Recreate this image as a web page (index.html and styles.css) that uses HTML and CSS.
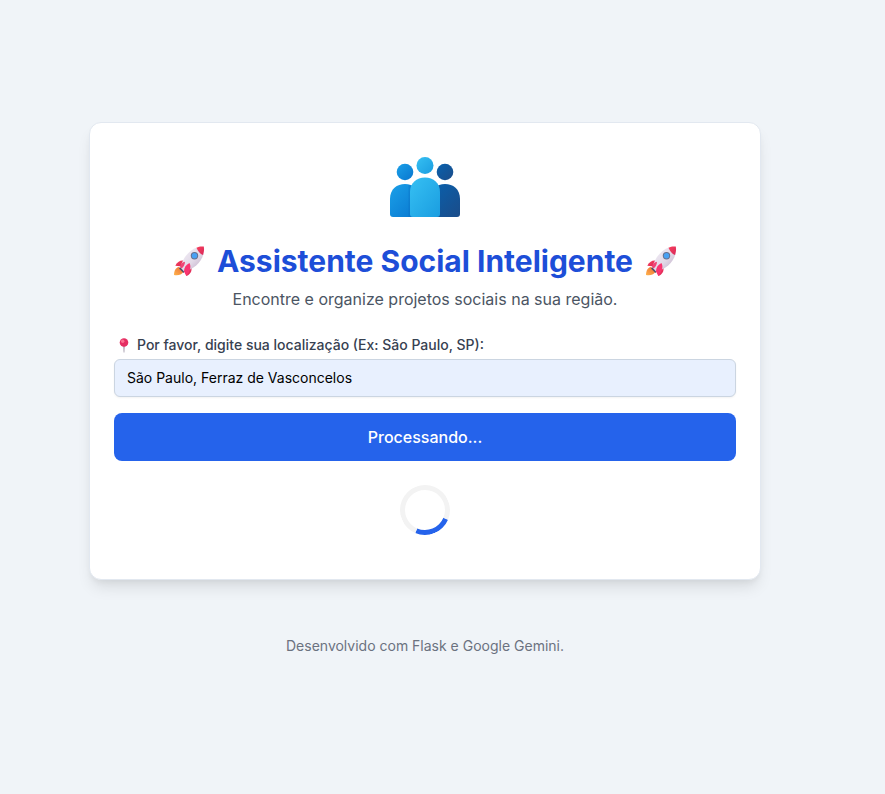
FILE: index.html
```html
<!DOCTYPE html>
<html lang="pt-BR">
<head>
<meta charset="utf-8">
<title>Assistente Social Inteligente</title>
<link rel="stylesheet" href="styles.css">
</head>
<body>
<svg class="defs" width="0" height="0" aria-hidden="true">
  <defs>
    <linearGradient id="body" x1="0" y1="0" x2="1" y2="1"><stop offset="0" stop-color="#f4f0f8"/><stop offset=".55" stop-color="#e2d9e7"/><stop offset="1" stop-color="#b9a5c2"/></linearGradient>
    <linearGradient id="red" x1="0" y1="0" x2="1" y2="1"><stop offset="0" stop-color="#f8415d"/><stop offset="1" stop-color="#d92759"/></linearGradient>
    <linearGradient id="flame" x1="1" y1="0" x2="0" y2="1"><stop offset="0" stop-color="#e96a35"/><stop offset="1" stop-color="#ffb34b"/></linearGradient>
    <symbol id="rocket" viewBox="0 0 32 32">
      <path d="M5 21C1.500 21.500 0 25 0 29C4 30 8.500 28.500 10 25Z" fill="url(#flame)"/>
      <path d="M6.500 21L11 25L9.500 27L5 22.500Z" fill="#4d4968"/>
      <path d="M10 14.500C6 14 3 16 1.300 19.800L8 20.500Z" fill="url(#red)"/>
      <path d="M17.500 21C18 26 16 28.500 12.300 30L11 24Z" fill="url(#red)"/>
      <path d="M6.500 21.500C8 13 15 4 23 1.500L29.500 8C27 17 19 23.500 10 25.500Z" fill="url(#body)"/>
      <path d="M22.500 1.700C25 .5 27 .3 29.800 .6C30.400 4 29.900 6.500 29 8.900C26 7.800 24 5.500 22.500 1.700Z" fill="url(#red)"/>
      <path d="M6 20.500C6.500 18 8.500 16 11 15.700C11 18.500 9.500 21 7.500 22.500Z" fill="#f04475"/>
      <path d="M10 25.500C10 21.500 12 18.500 15.500 17C17.500 21 16 25.500 12.300 30Z" fill="#f93470"/>
      <circle cx="20.500" cy="9.700" r="3.700" fill="#65708f"/>
      <circle cx="20.500" cy="9.700" r="2.700" fill="#48a1f4"/>
    </symbol>
  </defs>
</svg>
<main class="page">
  <section class="card">
    <svg class="logo" viewBox="0 0 70 60" aria-hidden="true">
      <defs>
        <linearGradient id="left" x1="0" y1="0" x2="1" y2="1"><stop stop-color="#1ba0e8"/><stop offset="1" stop-color="#0876cf"/></linearGradient>
        <linearGradient id="mid" x1="0" y1="0" x2="1" y2="1"><stop stop-color="#36c0f3"/><stop offset="1" stop-color="#1a9de0"/></linearGradient>
        <linearGradient id="right" x1="0" y1="0" x2="1" y2="1"><stop stop-color="#0861ae"/><stop offset="1" stop-color="#1b4c89"/></linearGradient>
      </defs>
      <circle cx="15" cy="15" r="8.300" fill="url(#left)"/>
      <circle cx="55" cy="15" r="8.300" fill="url(#right)"/>
      <circle cx="35" cy="8.500" r="8.500" fill="url(#mid)"/>
      <path d="M0 42C0 32 7 27 15 27S30 32 30 42V60H3Q0 60 0 57Z" fill="url(#left)"/>
      <path d="M40 42C40 32 47 27 55 27S70 32 70 42V57Q70 60 67 60H40Z" fill="url(#right)"/>
      <path d="M18.500 28Q19 27.500 22 29V60H18.500Z" fill="#086dbf" opacity=".35"/>
      <path d="M20 35C20 26 26.500 20.500 35 20.500S50 26 50 35V57Q50 60 47 60H23Q20 60 20 57Z" fill="url(#mid)"/>
    </svg>
    <h1 class="title">
      <svg class="rocket"><use href="#rocket"/></svg>
      <span>Assistente Social Inteligente</span>
      <svg class="rocket"><use href="#rocket"/></svg>
    </h1>
    <p class="subtitle">Encontre e organize projetos sociais na sua região.</p>
    <form class="form">
      <label class="label" for="location">
        <svg class="pin" viewBox="0 0 10 15"><path d="M4.400 8H5.600L5.300 14.500H4.700Z" fill="#8d8297"/><circle cx="5" cy="4.500" r="4.300" fill="#e52e62"/><circle cx="3.700" cy="3.200" r="1.700" fill="#fb7191"/></svg>
        <span>Por favor, digite sua localização (Ex: São Paulo, SP):</span>
      </label>
      <input class="input" id="location" type="text" value="São Paulo, Ferraz de Vasconcelos">
      <button class="button" type="button">Processando...</button>
    </form>
    <div class="spinner"></div>
  </section>
  <footer class="footer">Desenvolvido com Flask e Google Gemini.</footer>
</main>
</body>
</html>
```
FILE: styles.css
```css
* { box-sizing: border-box; }
body {
  margin: 0;
  min-height: 794px;
  background: #f0f4f8;
  font-family: Inter, sans-serif;
}
.defs { position: absolute; }
.page {
  width: 850px;
  padding-top: 122px;
  display: flex;
  flex-direction: column;
  align-items: center;
}
.card {
  width: 672px;
  height: 458px;
  padding: 34px 24px 0;
  border: 1px solid #e2e8f0;
  border-radius: 12px;
  background: #fff;
  box-shadow: 0 10px 15px -3px rgba(0, 0, 0, .1), 0 4px 6px -2px rgba(0, 0, 0, .05);
}
.logo { display: block; width: 70px; height: 60px; margin: 0 auto 26px; }
.title {
  display: flex;
  align-items: center;
  justify-content: center;
  gap: 12px;
  height: 36px;
  margin: 0 0 8px;
  color: #1d4ed8;
  font-size: 30px;
  line-height: 36px;
  font-weight: 700;
}
.rocket { width: 32px; height: 32px; flex: none; transform: translate(1px, 1px); }
.subtitle {
  margin: 0 0 24px;
  color: #4b5563;
  font-size: 16px;
  line-height: 24px;
  text-align: center;
}
.label {
  display: flex;
  align-items: center;
  gap: 8px;
  height: 20px;
  margin-bottom: 4px;
  padding-left: 5px;
  color: #374151;
  font-size: 14px;
  line-height: 20px;
  font-weight: 500;
}
.pin { width: 10px; height: 15px; }
.input {
  display: block;
  width: 100%;
  height: 38px;
  padding: 7px 12px 9px;
  border: 1px solid #cbd5e1;
  border-radius: 6px;
  background: #e8f0fe;
  box-shadow: 0 1px 2px rgba(0, 0, 0, .05);
  color: #000;
  font: 400 14px/20px Inter, sans-serif;
}
.button {
  display: block;
  width: 100%;
  height: 48px;
  margin: 16px 0 24px;
  border: 0;
  border-radius: 8px;
  background: #2563eb;
  color: #fff;
  font: 500 16px/24px Inter, sans-serif;
}
.spinner {
  width: 50px;
  height: 50px;
  margin: 0 auto;
  border: 5px solid #f3f3f3;
  border-top-color: #2563eb;
  border-radius: 50%;
  transform: rotate(158deg);
}
.footer {
  margin-top: 56px;
  color: #6b7280;
  font-size: 14px;
  line-height: 20px;
}
```
